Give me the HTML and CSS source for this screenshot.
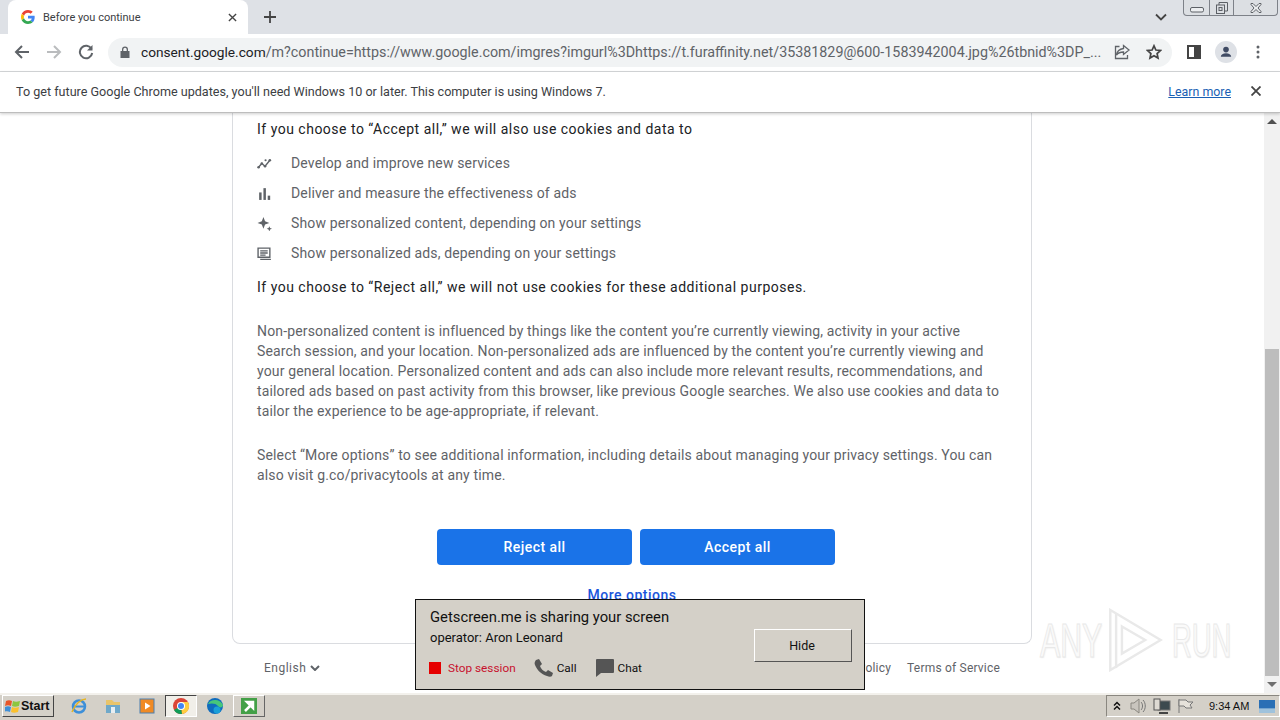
FILE: index.html
```html
<!DOCTYPE html>
<html lang="en">
<head>
    <meta charset="UTF-8">
    <title>Before you continue</title>
    <link rel="stylesheet" href="styles.css">
</head>
<body>
    <div class="screen">
        <!-- Browser chrome -->
        <div class="tabstrip">
            <div class="tab">
                <svg class="favicon" viewBox="0 0 48 48"><path fill="#ea4335" d="M24 9.5c3.5 0 6.7 1.2 9.2 3.6l6.9-6.9C35.900 2.400 30.500 0 24 0 14.600 0 6.500 5.400 2.600 13.200l8 6.200C12.400 13.700 17.700 9.500 24 9.500z"/><path fill="#4285f4" d="M46.900 24.500c0-1.600-.1-3.100-.4-4.500H24v9h12.900c-.6 3-2.200 5.500-4.800 7.200l7.700 6c4.500-4.200 7.100-10.300 7.100-17.700z"/><path fill="#fbbc05" d="M10.500 28.600c-.5-1.400-.8-3-.8-4.600s.3-3.200.8-4.600l-8-6.200C.9 16.500 0 20.100 0 24s.9 7.500 2.600 10.800l7.900-6.200z"/><path fill="#34a853" d="M24 48c6.500 0 11.900-2.100 15.900-5.800l-7.700-6c-2.200 1.400-4.900 2.300-8.200 2.300-6.300 0-11.600-4.200-13.500-9.900l-8 6.200C6.500 42.600 14.600 48 24 48z"/></svg>
                <span class="tab-title">Before you continue</span>
                <svg class="tab-close" viewBox="0 0 10 10"><path d="M1 1l8 8M9 1l-8 8"/></svg>
            </div>
            <svg class="new-tab" viewBox="0 0 12 12"><path d="M6 0v12M0 6h12"/></svg>
            <svg class="tab-search" viewBox="0 0 12 8"><path d="M1 1.500l5 5 5-5"/></svg>
            <div class="window-btns">
                <span class="win-btn win-min"><svg viewBox="0 0 14 6"><rect x=".5" y=".5" width="13" height="4.500" rx="1.500"/></svg></span>
                <span class="win-btn win-max"><svg viewBox="0 0 12 12"><rect x=".5" y="3" width="8" height="8.500"/><path d="M3 3V.5h8.500V9H8.500"/><rect x="3" y="5.500" width="3" height="3"/></svg></span>
                <span class="win-btn win-x"><svg viewBox="0 0 12 10"><path d="M1 .5h2l3 3 3-3h2v1L8 5l3 3.500v1H9l-3-3-3 3H1v-1L4 5 1 1.500z"/></svg></span>
            </div>
        </div>

        <div class="toolbar">
            <svg class="nav-icon" viewBox="0 0 16 16"><path d="M15 8H2M8 2L2 8l6 6"/></svg>
            <svg class="nav-icon nav-off" viewBox="0 0 16 16"><path d="M1 8h13M8 2l6 6-6 6"/></svg>
            <svg class="nav-icon nav-reload" viewBox="0 0 16 16"><path d="M13.500 5A6.200 6.200 0 1 0 14.200 9"/><path class="solid" d="M14.500 1v5.500H9z"/></svg>
            <div class="omnibox">
                <svg class="lock" viewBox="0 0 10 12"><path d="M2 5V3.500a3 3 0 0 1 6 0V5h1.500v7H.5V5zM3.300 5h3.400V3.500a1.700 1.700 0 0 0-3.400 0z"/></svg>
                <div class="url"><span class="url-host">consent.google.com</span>/m?continue=https://www.google.com/imgres?imgurl%3Dhttps://t.furaffinity.net/35381829@600-1583942004.jpg%26tbnid%3DP_...</div>
                <svg class="omni-icon" viewBox="0 0 16 16"><path d="M9.500 1.500L15 6l-5.500 4.500V8C6 8 4 9 2.500 11c.5-3.500 3-6 7-6.500zM5.500 2.500H1.500v12h12V11"/></svg>
                <svg class="omni-icon star" viewBox="0 0 16 16"><path d="M8 1.800l1.900 4.200 4.600.5-3.400 3 .9 4.500-4-2.300-4 2.300.9-4.500-3.400-3 4.600-.5z"/></svg>
            </div>
            <svg class="side-panel" viewBox="0 0 14 14"><rect x="1" y="1" width="12" height="12"/><rect class="fill" x="8" y="1" width="5" height="12"/></svg>
            <span class="avatar"><svg viewBox="0 0 20 20"><circle cx="10" cy="7" r="3.500"/><path d="M3.500 16c0-3 3-4.500 6.500-4.500s6.500 1.500 6.500 4.500z"/></svg></span>
            <svg class="kebab" viewBox="0 0 4 14"><circle cx="2" cy="2" r="1.500"/><circle cx="2" cy="7" r="1.500"/><circle cx="2" cy="12" r="1.500"/></svg>
        </div>

        <div class="infobar">
            <span class="info-text">To get future Google Chrome updates, you'll need Windows 10 or later. This computer is using Windows 7.</span>
            <a class="learn-more">Learn more</a>
            <svg class="info-close" viewBox="0 0 10 10"><path d="M.5.5l9 9M9.500.5l-9 9"/></svg>
        </div>

        <!-- Page -->
        <div class="viewport">
            <div class="page">
                <div class="card">
                    <p class="lead">If you choose to “Accept all,” we will also use cookies and data to</p>
                    <ul class="purposes">
                        <li>
                            <svg viewBox="0 0 14 14"><path class="line" d="M1 11l3.500-4 3 2.500L12 4"/><circle cx="1.500" cy="10.500" r="1.200"/><circle cx="4.500" cy="7" r="1.200"/><circle cx="7.500" cy="9.500" r="1.200"/><circle cx="8" cy="4" r="1"/><circle cx="12" cy="4" r="1.200"/></svg>
                            <span>Develop and improve new services</span>
                        </li>
                        <li>
                            <svg viewBox="0 0 14 14"><rect x="2" y="6" width="2.300" height="7"/><rect x="6" y="2" width="2.300" height="11"/><rect x="10" y="9" width="2.300" height="4"/></svg>
                            <span>Deliver and measure the effectiveness of ads</span>
                        </li>
                        <li>
                            <svg viewBox="0 0 14 14"><path d="M6 1l1.500 4 4 1.500-4 1.500L6 12 4.500 8l-4-1.500 4-1.500z"/><path d="M11.500 9.500l.7 1.800 1.800.7-1.800.7-.7 1.800-.7-1.800L9 12l1.800-.7z"/></svg>
                            <span>Show personalized content, depending on your settings</span>
                        </li>
                        <li>
                            <svg viewBox="0 0 14 14"><path class="line" d="M1 2h11v8.500H1zM3 4.500h7M3 6.500h7M3 8.500h5M3 12.500h10"/></svg>
                            <span>Show personalized ads, depending on your settings</span>
                        </li>
                    </ul>
                    <p class="lead">If you choose to “Reject all,” we will not use cookies for these additional purposes.</p>
                    <p class="body-text para-one">Non-personalized content is influenced by things like the content you’re currently viewing, activity in your active Search session, and your location. Non-personalized ads are influenced by the content you’re currently viewing and your general location. Personalized content and ads can also include more relevant results, recommendations, and tailored ads based on past activity from this browser, like previous Google searches. We also use cookies and data to tailor the experience to be age-appropriate, if relevant.</p>
                    <p class="body-text para-two">Select “More options” to see additional information, including details about managing your privacy settings. You can also visit g.co/privacytools at any time.</p>
                    <div class="actions">
                        <button class="btn">Reject all</button>
                        <button class="btn">Accept all</button>
                    </div>
                    <a class="more-options">More options</a>
                </div>
                <div class="page-footer">
                    <span class="lang">English
                        <svg viewBox="0 0 10 6"><path d="M1 1l4 4 4-4"/></svg>
                    </span>
                    <span class="footer-links"><span>Privacy Policy</span><span>Terms of Service</span></span>
                </div>
            </div>
            <div class="scrollbar">
                <span class="sb-arrow sb-up"></span>
                <div class="sb-track"><div class="sb-thumb"></div></div>
                <span class="sb-arrow sb-down"></span>
            </div>

            <!-- Overlays -->
            <div class="watermark">
                <span class="wm-any">ANY</span>
                <svg viewBox="0 0 56 66"><path d="M2 2l52 31L2 64z"/><path d="M14 19l24 14-24 14z"/><path d="M8 6v56"/></svg>
                <span class="wm-run">RUN</span>
            </div>
            <div class="share-panel">
                <div class="share-info">
                    <div class="share-title">Getscreen.me is sharing your screen</div>
                    <div class="share-operator">operator: Aron Leonard</div>
                    <div class="share-actions">
                        <span class="stop"><i class="stop-box"></i>Stop session</span>
                        <span class="share-act"><svg viewBox="0 0 20 20"><path d="M5 1l3 5-2 2c1 3 3 5 6 6l2-2 5 3-1 3c-1 1-3 1-5 0C7 16 3 12 1 7 0 5 1 3 2 2z"/></svg>Call</span>
                        <span class="share-act"><svg viewBox="0 0 20 20"><path d="M2 1h16a1 1 0 0 1 1 1v12a1 1 0 0 1-1 1H6l-5 4V2a1 1 0 0 1 1-1z"/></svg>Chat</span>
                    </div>
                </div>
                <button class="hide-btn">Hide</button>
            </div>
        </div>

        <!-- Windows taskbar -->
        <div class="taskbar">
            <div class="start-btn">
                <svg viewBox="0 0 16 16"><path fill="#e8562a" d="M1 3c2-1 4-1 6 0l-1 5c-2-1-4-1-6 0z"/><path fill="#8cc63f" d="M8 3c2 1 4 1 7 0l-1 5c-3 1-5 1-7 0z"/><path fill="#3f8fd8" d="M0 9c2-1 4-1 6 0l-1 5c-2-1-4-1-6 0z"/><path fill="#fbc02d" d="M7 9c2 1 4 1 7 0l-1 5c-3 1-5 1-7 0z"/></svg>
                Start
            </div>
            <div class="task-icons">
                <span class="task-item">
                    <svg viewBox="0 0 18 18"><circle cx="9" cy="9.500" r="6" fill="none" stroke="#3d8fd9" stroke-width="2.500"/><path d="M3 9.500h12" stroke="#3d8fd9" stroke-width="2"/><path d="M2 15C5 7 11 2 16 2" stroke="#e6b422" stroke-width="1.500" fill="none"/></svg>
                </span>
                <span class="task-item">
                    <svg viewBox="0 0 18 18"><path fill="#e9c46a" d="M2 3h6l2 2h6v4H2z"/><path fill="#6fa8c9" d="M2 8h14v8H2z"/><rect x="7" y="10" width="4" height="6" fill="#e8eef2"/></svg>
                </span>
                <span class="task-item">
                    <svg viewBox="0 0 18 18"><rect x="2" y="2" width="14" height="14" fill="#f08a24" stroke="#4a7fb0"/><path d="M7 5.500l5.500 3.500L7 12.500z" fill="#fff"/></svg>
                </span>
                <span class="task-item task-active">
                    <svg viewBox="0 0 18 18"><circle cx="9" cy="9" r="8" fill="#db4437"/><path d="M9 9L2 13a8 8 0 0 0 8 4z" fill="#0f9d58"/><path d="M9 5h7a8 8 0 0 1-6 12z" fill="#ffcd40"/><circle cx="9" cy="9" r="4" fill="#fff"/><circle cx="9" cy="9" r="3" fill="#4285f4"/></svg>
                </span>
                <span class="task-item">
                    <svg viewBox="0 0 18 18"><circle cx="9" cy="9" r="8" fill="#0f6cbd"/><path d="M2 7c2-5 12-6 15 1 0 3-4 3-5 1C10 6 5 6 2 7z" fill="#47c67a"/><circle cx="11" cy="13" r="3.500" fill="#1a9fd8"/></svg>
                </span>
                <span class="task-item task-raised">
                    <svg viewBox="0 0 18 18"><rect x="1" y="1" width="16" height="16" fill="#43a047"/><path d="M5 14l6-6M7 5h6v6z" stroke="#fff" stroke-width="2.500" fill="#fff"/></svg>
                </span>
            </div>
            <div class="tray">
                <svg class="tray-icon tray-up" viewBox="0 0 8 10"><path d="M1 4.500l3-3 3 3M1 8.500l3-3 3 3"/></svg>
                <svg class="tray-icon" viewBox="0 0 18 16"><path fill="#c9c5be" stroke="#8a8780" d="M2 5h3l5-4v14l-5-4H2z"/><path d="M12 4c2 2 2 6 0 8M14 2c3 3 3 9 0 12"/></svg>
                <svg class="tray-icon" viewBox="0 0 18 16"><rect x="5" y="3" width="12" height="9" fill="#3c4a4f"/><rect x="1" y="1" width="6" height="11" fill="#dedad3" stroke="#555"/><path d="M6 15h9" stroke="#444" stroke-width="2"/></svg>
                <svg class="tray-icon" viewBox="0 0 18 16"><path d="M2 1v14"/><path fill="#e6e2da" d="M2 2h7l2 2h5l-3 3 2 3h-6l-2-2H2z"/></svg>
                <span class="clock">9:34 AM</span>
                <svg class="show-desktop" viewBox="0 0 18 14" preserveAspectRatio="none"><rect width="18" height="14" fill="#2a6fb5"/><rect y="9" width="18" height="5" fill="#9fc2dc"/></svg>
            </div>
        </div>
    </div>
</body>
</html>
```

FILE: styles.css
```css
* {
    box-sizing: border-box;
}
html, body {
    margin: 0;
    padding: 0;
}
body {
    width: 1280px;
    height: 720px;
    overflow: hidden;
    font-family: Roboto, 'Liberation Sans', sans-serif;
    color: #333;
    background: #fff;
}
.screen {
    display: flex;
    flex-direction: column;
    height: 720px;
}

/* tab strip */
.tabstrip {
    display: flex;
    align-items: flex-start;
    height: 34px;
    background-color: #dee1e6;
    flex-shrink: 0;
}
.tab {
    display: flex;
    align-items: center;
    width: 240px;
    height: 34px;
    margin-left: 8px;
    padding: 0 11px 0 13px;
    background: #fff;
    border-radius: 8px 8px 0 0;
}
.favicon {
    width: 14px;
    height: 14px;
    flex-shrink: 0;
}
.tab-title {
    flex: 1;
    margin-left: 8px;
    font-size: 11px;
    color: #3c4043;
}
.tab-close {
    width: 9px;
    height: 9px;
    fill: none;
    stroke: #444;
    stroke-width: 1.500;
}
.new-tab {
    width: 12px;
    height: 12px;
    margin: 11px 0 0 16px;
    fill: none;
    stroke: #444;
    stroke-width: 1.800;
}
.tab-search {
    width: 12px;
    height: 8px;
    margin: 13px 0 0 879px;
    fill: none;
    stroke: #444;
    stroke-width: 1.800;
}
.window-btns {
    display: flex;
    width: 95px;
    height: 16px;
    margin-left: 16px;
    background: #dcdfe3;
    border: 1px solid #7d8188;
    border-top: none;
    border-radius: 0 0 4px 4px;
}
.win-btn {
    display: flex;
    align-items: center;
    justify-content: center;
    border-right: 1px solid #7d8188;
}
.win-btn svg {
    fill: none;
    stroke: #5c6066;
}
.win-min {
    width: 26px;
}
.win-min svg {
    width: 14px;
    height: 6px;
    margin-top: 4px;
    fill: #eceef0;
}
.win-max {
    width: 24px;
}
.win-max svg {
    width: 12px;
    height: 12px;
}
.win-x {
    flex: 1;
    border-right: none;
}
.win-x svg {
    width: 12px;
    height: 10px;
    fill: #eceef0;
}

/* toolbar */
.toolbar {
    display: flex;
    align-items: center;
    height: 38px;
    padding: 0 0 1px 14px;
    background: #fff;
    border-bottom: 1px solid #d6d8da;
    flex-shrink: 0;
}
.nav-icon {
    width: 16px;
    height: 16px;
    margin-right: 16px;
    fill: none;
    stroke: #5f6368;
    stroke-width: 2;
}
.nav-icon .solid {
    fill: #5f6368;
    stroke: none;
}
.nav-off {
    stroke: #babcbe;
}
.nav-reload {
    margin-right: 14px;
}
.omnibox {
    display: flex;
    align-items: center;
    width: 1064px;
    height: 29px;
    padding: 0 10px 0 12px;
    background: #f1f3f4;
    border-radius: 15px;
    flex-shrink: 0;
}
.lock {
    width: 10px;
    height: 12px;
    flex-shrink: 0;
    fill: #5f6368;
}
.url {
    flex: 1;
    margin-left: 11px;
    font-size: 14.300px;
    color: #5f6368;
    white-space: nowrap;
    overflow: hidden;
}
.url-host {
    font-size: 13.700px;
    color: #202124;
}
.omni-icon {
    width: 16px;
    height: 16px;
    margin-left: 10px;
    flex-shrink: 0;
    fill: none;
    stroke: #5f6368;
    stroke-width: 1.300;
}
.star {
    margin-left: 16px;
    stroke-width: 1.700;
    stroke: #444;
}
.side-panel {
    width: 14px;
    height: 14px;
    margin-left: 15px;
    fill: none;
    stroke: #444;
    stroke-width: 2;
    flex-shrink: 0;
}
.side-panel .fill {
    fill: #444;
}
.avatar {
    display: flex;
    align-items: center;
    justify-content: center;
    width: 22px;
    height: 22px;
    margin-left: 14px;
    border-radius: 50%;
    background: #dee1e6;
    flex-shrink: 0;
}
.avatar svg {
    width: 16px;
    height: 16px;
    fill: #3f4a63;
}
.kebab {
    width: 4px;
    height: 14px;
    margin-left: 19px;
    fill: #5f6368;
    flex-shrink: 0;
}

/* info bar */
.infobar {
    display: flex;
    align-items: center;
    height: 41px;
    padding: 0 19px 2px 16px;
    background: #fff;
    border-bottom: 1px solid #bdbdbd;
    box-shadow: 0 1px 3px rgba(0,0,0,0.2);
    position: relative;
    z-index: 2;
    flex-shrink: 0;
}
.info-text {
    flex: 1;
    font-size: 12.600px;
    color: #3c4043;
}
.learn-more {
    font-size: 12.400px;
    color: #1a5fb4;
    text-decoration: underline;
}
.info-close {
    width: 10px;
    height: 10px;
    margin-left: 20px;
    fill: none;
    stroke: #444;
    stroke-width: 1.800;
}

/* page */
.viewport {
    position: relative;
    display: flex;
    flex: 1;
    min-height: 0;
}
.page {
    flex: 1;
    overflow: hidden;
}
.card {
    width: 800px;
    height: 531px;
    margin-left: 232px;
    padding: 6px 24px 0;
    border: 1px solid #dadce0;
    border-top: none;
    border-radius: 0 0 8px 8px;
}
.lead {
    margin: 0;
    font-size: 14px;
    line-height: 20px;
    letter-spacing: 0.5px;
    color: #202124;
}
.purposes {
    list-style: none;
    margin: 9px 0 9px;
    padding: 0;
}
.purposes li {
    display: flex;
    align-items: center;
    height: 30px;
    font-size: 14px;
    letter-spacing: 0.14px;
    color: #5f6368;
}
.purposes svg {
    width: 15px;
    height: 15px;
    margin-right: 19px;
    fill: #5f6368;
    flex-shrink: 0;
}
.purposes .line {
    fill: none;
    stroke: #5f6368;
    stroke-width: 1.300;
}
.body-text {
    margin: 0;
    font-size: 14px;
    line-height: 20px;
    letter-spacing: 0.15px;
    color: #5f6368;
}
.para-one {
    margin-top: 24px;
}
.para-two {
    margin-top: 24px;
}
.actions {
    display: flex;
    justify-content: center;
    gap: 8px;
    margin-top: 44px;
    padding-left: 8px;
}
.btn {
    width: 195px;
    height: 36px;
    font-family: inherit;
    font-size: 14px;
    font-weight: 500;
    letter-spacing: 0.45px;
    color: #fff;
    background-color: #1a73e8;
    border: none;
    border-radius: 4px;
}
.more-options {
    display: block;
    margin-top: 22px;
    text-align: center;
    font-size: 14px;
    font-weight: 500;
    letter-spacing: 0.5px;
    color: #1a56db;
}
.page-footer {
    display: flex;
    justify-content: space-between;
    width: 736px;
    margin: 17px 0 0 264px;
    font-size: 12px;
    color: #5f6368;
}
.lang {
    display: flex;
    align-items: center;
    gap: 4px;
    letter-spacing: 0.5px;
}
.lang svg {
    width: 10px;
    height: 6px;
    fill: none;
    stroke: #5f6368;
    stroke-width: 2;
}
.footer-links {
    display: flex;
    gap: 16px;
    letter-spacing: 0.2px;
}

/* scrollbar */
.scrollbar {
    display: flex;
    flex-direction: column;
    width: 16px;
    background: #f1f1f1;
    flex-shrink: 0;
}
.sb-arrow {
    height: 17px;
    flex-shrink: 0;
    position: relative;
}
.sb-up::after {
    content: "";
    position: absolute;
    left: 3px;
    top: 1px;
    border: 5px solid transparent;
    border-bottom: 5px solid #505050;
}
.sb-down::after {
    content: "";
    position: absolute;
    left: 3px;
    top: 6px;
    border: 5px solid transparent;
    border-top: 5px solid #6f6f6f;
}
.sb-track {
    display: flex;
    flex: 1;
    flex-direction: column;
    justify-content: flex-end;
}
.sb-thumb {
    height: 327px;
    margin: 0 1px;
    background: #bdbdbd;
}

/* overlays */
.watermark {
    position: absolute;
    left: 1040px;
    top: 495px;
    display: flex;
    align-items: center;
    font-family: 'Liberation Sans', sans-serif;
    font-size: 48px;
    color: #fafafa;
    -webkit-text-stroke: 1px #e8e8e8;
    text-shadow: 1px 1px 2px #ececec;
}
.watermark span {
    display: block;
    transform-origin: left center;
    white-space: nowrap;
}
.wm-any {
    width: 62px;
    transform: scaleX(0.63);
}
.wm-run {
    width: 59px;
    margin-left: 9px;
    transform: scaleX(0.57);
}
.watermark svg {
    width: 55px;
    height: 64px;
    margin-left: 6px;
    fill: none;
    stroke: #e9e9e9;
    stroke-width: 2.500;
}
.share-panel {
    position: absolute;
    left: 415px;
    top: 486px;
    display: flex;
    width: 450px;
    height: 91px;
    padding: 8px 12px 0 14px;
    background-color: #d4d0c8;
    border: 1px solid #111;
    color: #111;
}
.share-info {
    flex: 1;
}
.share-title {
    font-size: 14.800px;
    line-height: 19px;
}
.share-operator {
    margin-top: 2px;
    font-size: 13px;
    line-height: 18px;
}
.share-actions {
    display: flex;
    align-items: center;
    margin-top: 11px;
    font-size: 11.800px;
}
.stop {
    display: flex;
    align-items: center;
    color: #c8102e;
    margin-right: 18px;
}
.stop-box {
    width: 12px;
    height: 12px;
    margin-left: -1px;
    margin-right: 7px;
    background: #e60000;
}
.share-act {
    display: flex;
    align-items: center;
    gap: 3px;
    margin-right: 18px;
}
.share-act svg {
    width: 20px;
    height: 20px;
    fill: #555;
}
.hide-btn {
    width: 98px;
    height: 33px;
    margin-top: 21px;
    padding-right: 8px;
    font-family: inherit;
    font-size: 12.500px;
    color: #111;
    background: #d4d0c8;
    border: 1px solid;
    border-color: #fff #555 #555 #fff;
}

/* taskbar */
.taskbar {
    display: flex;
    align-items: center;
    height: 27px;
    padding-bottom: 3px;
    background: #d4d0c8;
    border-top: 2px solid #f3f1ec;
    flex-shrink: 0;
}
.start-btn {
    display: flex;
    align-items: center;
    width: 52px;
    height: 22px;
    margin-left: 2px;
    padding-left: 2px;
    font-family: 'Liberation Sans', sans-serif;
    font-size: 12.500px;
    font-weight: bold;
    color: #111;
    border: 1px solid;
    border-color: #fff #444 #444 #fff;
}
.start-btn svg {
    width: 16px;
    height: 16px;
}
.task-icons {
    display: flex;
    align-items: center;
    gap: 2px;
    margin-left: 9px;
}
.task-item {
    display: flex;
    align-items: center;
    justify-content: center;
    width: 32px;
    height: 22px;
}
.task-item svg {
    width: 18px;
    height: 18px;
}
.task-active {
    background: #f1efe9;
    border: 1px solid;
    border-color: #444 #fff #fff #444;
}
.task-raised {
    border: 1px solid;
    border-color: #fff #666 #666 #fff;
}
.tray {
    display: flex;
    align-items: center;
    width: 174px;
    height: 22px;
    margin-left: auto;
    padding-left: 6px;
    border: 1px solid;
    border-color: #8a8780 #fff #fff #8a8780;
    font-family: 'Liberation Sans', sans-serif;
}
.tray-icon {
    width: 18px;
    height: 16px;
    margin-right: 6px;
    fill: none;
    stroke: #777;
}
.tray-up {
    width: 8px;
    height: 10px;
    margin-right: 8px;
    stroke: #111;
    stroke-width: 1.500;
}
.clock {
    margin-left: 8px;
    font-size: 11px;
    color: #111;
}
.show-desktop {
    width: 16px;
    height: 13px;
    margin-left: 10px;
}
```
